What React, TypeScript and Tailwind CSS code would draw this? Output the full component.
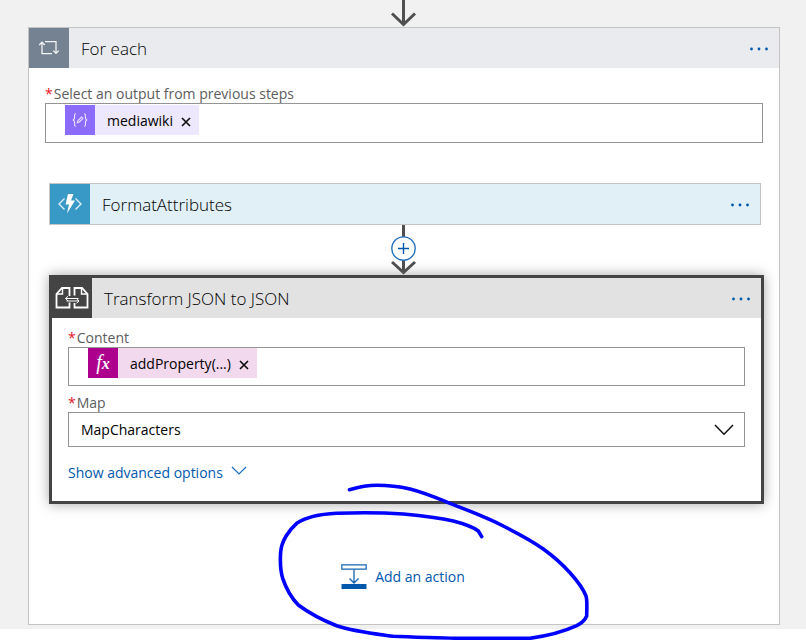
import type { ReactNode } from "react";

const FONT = "font-['Segoe_UI','Open_Sans',sans-serif]";

function FlowArrow({ plus = false }: { plus?: boolean }) {
  if (!plus) {
    return (
      <svg width="26" height="27" viewBox="0 0 26 27" fill="none" stroke="#4f4f4f" strokeWidth="3" aria-hidden="true">
        <path d="M12.5 0V24M1 13.5L12.5 24.5L24 13.5" />
      </svg>
    );
  }
  return (
    <button type="button" aria-label="Insert a new step" className="block">
      <svg width="26" height="50" viewBox="0 0 26 50" fill="none" aria-hidden="true">
        <path d="M12.5 0V47M1 37L12.5 47.5L24 37" stroke="#4f4f4f" strokeWidth="3" />
        <circle cx="12.5" cy="23.5" r="11.7" fill="#fff" stroke="#1a6cbd" strokeWidth="1.3" />
        <path d="M12.5 18V29M7 23.5H18" stroke="#0058ad" strokeWidth="1.4" />
      </svg>
    </button>
  );
}

function MoreButton({ name }: { name: string }) {
  return (
    <button type="button" aria-label={`Menu for ${name}`} className="ml-auto mr-2.5 pt-0.5">
      <svg width="20" height="6" viewBox="0 0 20 6" fill="#0058ad" aria-hidden="true">
        <circle cx="2.5" cy="3" r="1.4" />
        <circle cx="10" cy="3" r="1.4" />
        <circle cx="17.5" cy="3" r="1.4" />
      </svg>
    </button>
  );
}

function StepHeader({
  title,
  icon,
  iconClass,
  barClass,
}: {
  title: string;
  icon: ReactNode;
  iconClass: string;
  barClass: string;
}) {
  return (
    <header className={`flex h-10 items-center ${barClass}`}>
      <span className={`flex h-10 w-10 shrink-0 items-center justify-center ${iconClass}`}>{icon}</span>
      <h2 className="ml-3 pt-0.5 text-[17px] font-light leading-6 text-black">{title}</h2>
      <MoreButton name={title} />
    </header>
  );
}

function FieldLabel({ htmlFor, children }: { htmlFor: string; children: ReactNode }) {
  return (
    <label htmlFor={htmlFor} className="block text-sm leading-[18px] text-[#5c5c5c]">
      <span className="mr-px text-[#e81123]">*</span>
      {children}
    </label>
  );
}

function TokenField({
  id,
  token,
  icon,
  iconClass,
  boxClass,
  tokenClass,
}: {
  id: string;
  token: string;
  icon: ReactNode;
  iconClass: string;
  boxClass: string;
  tokenClass: string;
}) {
  return (
    <div className={`flex items-start border border-[#949494] bg-white pl-[19px] ${boxClass}`}>
      <span className={`flex h-[30px] shrink-0 items-center text-sm text-black ${tokenClass}`}>
        <span className={`mr-3 flex h-[30px] w-[30px] items-center justify-center ${iconClass}`}>{icon}</span>
        <span className="pt-0.5">{token}</span>
        <button type="button" aria-label={`Remove ${token}`} className="ml-2 mr-2 pt-1">
          <svg width="10" height="10" viewBox="0 0 10 10" stroke="#111" strokeWidth="1.7" aria-hidden="true">
            <path d="M1 1L9 9M9 1L1 9" />
          </svg>
        </button>
      </span>
      <input id={id} type="text" className="h-full min-w-0 flex-1 bg-transparent px-1 text-sm outline-none" />
    </div>
  );
}

const loopIcon = (
  <svg width="22" height="16" viewBox="0 0 22 16" fill="none" stroke="#f1f3f5" strokeWidth="1.3" aria-hidden="true">
    <path d="M7 1.7H18V13M15.2 10.6L18 13.4L20.8 10.6" />
    <path d="M14 13.7H4V2.5M1.2 5L4 2.2L6.8 5" />
  </svg>
);

const functionIcon = (
  <svg width="24" height="20" viewBox="0 0 24 20" fill="none" aria-hidden="true">
    <path d="M6.5 4.5L1 10L6.5 15.5M17.5 4.5L23 10L17.5 15.5" stroke="#d8edf7" strokeWidth="1.4" />
    <path d="M10 0H15.5L13 6.5H17L9 19.5L11 10.5H7.5Z" fill="#fff" />
  </svg>
);

const transformIcon = (
  <svg width="34" height="22" viewBox="0 0 34 22" fill="none" stroke="#fff" strokeWidth="1.8" aria-hidden="true">
    <path d="M14.5 9V1H7L1.500 7V20.500H14.500V15.500" />
    <path d="M7.500 1.500V7H2" strokeWidth="1.400" />
    <path d="M19.500 8.500V1H27L32.500 7V20.500H19.500V16" />
    <path d="M26.500 1.500V7H32" strokeWidth="1.400" />
    <path d="M23.500 11.500H10.500M13 9.200L10.500 11.500L13 13.800M11.500 14H24M21.500 11.700L24 14L21.500 16.300" strokeWidth="1" />
  </svg>
);

const composeIcon = (
  <svg width="16" height="14" viewBox="0 0 16 14" fill="none" stroke="#e8e0ff" strokeWidth="1.1" aria-hidden="true">
    <path d="M4 .7C2.2.7 2.6 2.2 2.6 4C2.6 6 2.3 6.8.8 7C2.3 7.2 2.6 8 2.6 10C2.6 11.8 2.2 13.3 4 13.3" />
    <path d="M12 .7C13.8.7 13.4 2.2 13.4 4C13.4 6 13.7 6.8 15.2 7C13.7 7.2 13.4 8 13.4 10C13.4 11.8 13.8 13.3 12 13.3" />
    <path d="M5.3 9.7L6 7.5L9.6 4L11 5.3L7.4 9Z" />
  </svg>
);

const expressionIcon = (
  <span className="font-['Liberation_Serif',serif] text-xl italic leading-6 text-white">
    f<span className="text-base font-bold">x</span>
  </span>
);

export default function App() {
  return (
    <div className={`bg-white pb-[11px] ${FONT}`}>
      <main className="bg-[#f1f1f1] pb-1 pl-7 pr-[26px]">
        <div className="flex justify-center">
          <FlowArrow />
        </div>

        <section className="border border-[#c4c4c4] bg-white">
          <StepHeader title="For each" icon={loopIcon} iconClass="bg-[#748291]" barClass="bg-[#e9ebef]" />

          <div className="mx-4 mt-[17px]">
            <FieldLabel htmlFor="output">Select an output from previous steps</FieldLabel>
            <TokenField
              id="output"
              token="mediawiki"
              icon={composeIcon}
              iconClass="bg-[#8c6cff]"
              boxClass="h-10 pt-px"
              tokenClass="bg-[#eee8ff]"
            />
          </div>

          <section className="ml-5 mr-[18px] mt-10 border border-[#c4c4c4]">
            <StepHeader title="FormatAttributes" icon={functionIcon} iconClass="bg-[#3999c6]" barClass="bg-[#e1eff6]" />
          </section>

          <div className="flex justify-center">
            <FlowArrow plus />
          </div>

          <section className="ml-5 mr-[15px] border-[3px] border-[#444] bg-white shadow-[0_0_12px_rgba(0,0,0,0.35)]">
            <StepHeader title="Transform JSON to JSON" icon={transformIcon} iconClass="bg-[#444]" barClass="bg-[#e2e2e2]" />
            <div className="px-4 pb-[18px] pt-[11px]">
              <FieldLabel htmlFor="content">Content</FieldLabel>
              <TokenField
                id="content"
                token="addProperty(...)"
                icon={expressionIcon}
                iconClass="bg-[#ad008c]"
                boxClass="h-[39px]"
                tokenClass="bg-[#f3d9ee]"
              />
              <div className="mt-2">
                <FieldLabel htmlFor="map">Map</FieldLabel>
                <div className="relative">
                  <select
                    id="map"
                    className="block h-[35px] w-full appearance-none rounded-none border border-[#949494] bg-white px-3 text-sm text-black"
                  >
                    <option>MapCharacters</option>
                  </select>
                  <svg
                    width="20"
                    height="12"
                    viewBox="0 0 20 12"
                    fill="none"
                    stroke="#111"
                    strokeWidth="1.5"
                    className="pointer-events-none absolute right-[11px] top-3"
                    aria-hidden="true"
                  >
                    <path d="M1 1L10 10.2L19 1" />
                  </svg>
                </div>
              </div>
              <button type="button" className="mt-4 flex items-center text-sm leading-5 text-[#0058ad]">
                Show advanced options
                <svg width="16" height="14" viewBox="0 0 16 14" fill="none" stroke="#1a6cbd" strokeWidth="1.2" className="ml-2" aria-hidden="true">
                  <path d="M1 1L8 8L15 1" />
                </svg>
              </button>
            </div>
          </section>

          <div className="relative flex justify-center pb-[34px] pt-[59px]">
            <button type="button" className="flex items-center gap-2 pr-0.5 text-sm leading-5 text-[#0058ad]">
              <svg width="26" height="27" viewBox="0 0 26 27" fill="none" stroke="#1464b4" aria-hidden="true">
                <path d="M.8 1.8H25.2V6.2H.8Z" strokeWidth="1.2" />
                <path d="M13 6.5V20M8.5 15.5L13 20L17.5 15.5" strokeWidth="1.3" />
                <path d="M.5 21H25.5V26H.5Z" fill="#0058ad" stroke="none" />
              </svg>
              Add an action
            </button>
            <svg
              width="320"
              height="156"
              viewBox="0 0 320 156"
              fill="none"
              stroke="#0000fe"
              strokeWidth="3.6"
              strokeLinecap="round"
              strokeLinejoin="round"
              className="pointer-events-none absolute -top-5 left-1/2 -ml-[126px] overflow-visible"
              aria-hidden="true"
            >
              <path d="M71.5 5.7C81 3 90 1.3 98.7 1.3C110 1.3 121 2.5 132 5C146 8.5 159 14 172 19.3C190 26.5 208 33 225.3 42C240 49.5 253 56 265.3 65C275 72 284 80 292 88.7C299 96.5 305 104 308 112C309.5 117 308.7 125 308.7 132C307 136 304 139 298.7 141.7C285 148 269 152 252 154.3H178.7C157 153.3 136 153.5 115.3 152.3C95 149.5 76 147.5 58.7 141.7C44 136 31 129 20.3 121C13 113.5 8 104 4.7 94.3C2.2 86 2 77 2.7 67.7C3.5 57 11 46 18.7 39.3C28 33 44 30 58.7 29.3C81 28.5 103 28.5 125.3 30C142 31.5 160 33.5 175.3 37C185 39.5 194 42 200.3 47L203.7 52.7" />
            </svg>
          </div>
        </section>
      </main>
    </div>
  );
}
